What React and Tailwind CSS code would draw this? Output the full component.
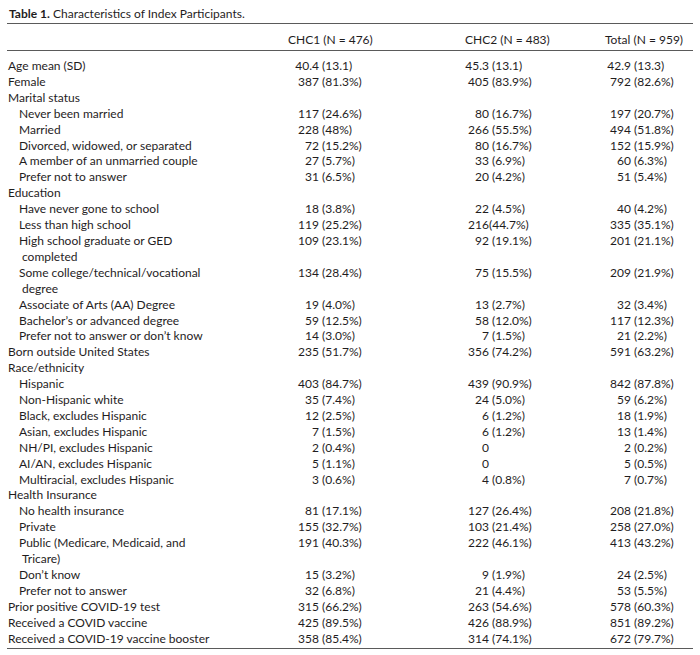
const rows = [
  { label: 'Age mean (SD)', values: [['40.4', ' (13.1)'], ['45.3', ' (13.1)'], ['42.9', ' (13.3)']] },
  { label: 'Female', values: [['387', ' (81.3%)'], ['405', ' (83.9%)'], ['792', ' (82.6%)']] },
  { label: 'Marital status' },
  { label: 'Never been married', sub: true, values: [['117', ' (24.6%)'], ['80', ' (16.7%)'], ['197', ' (20.7%)']] },
  { label: 'Married', sub: true, values: [['228', ' (48%)'], ['266', ' (55.5%)'], ['494', ' (51.8%)']] },
  { label: 'Divorced, widowed, or separated', sub: true, values: [['72', ' (15.2%)'], ['80', ' (16.7%)'], ['152', ' (15.9%)']] },
  { label: 'A member of an unmarried couple', sub: true, values: [['27', ' (5.7%)'], ['33', ' (6.9%)'], ['60', ' (6.3%)']] },
  { label: 'Prefer not to answer', sub: true, values: [['31', ' (6.5%)'], ['20', ' (4.2%)'], ['51', ' (5.4%)']] },
  { label: 'Education' },
  { label: 'Have never gone to school', sub: true, values: [['18', ' (3.8%)'], ['22', ' (4.5%)'], ['40', ' (4.2%)']] },
  { label: 'Less than high school', sub: true, values: [['119', ' (25.2%)'], ['216', '(44.7%)'], ['335', ' (35.1%)']] },
  { label: 'High school graduate or GED', more: 'completed', sub: true, values: [['109', ' (23.1%)'], ['92', ' (19.1%)'], ['201', ' (21.1%)']] },
  { label: 'Some college/technical/vocational', more: 'degree', sub: true, values: [['134', ' (28.4%)'], ['75', ' (15.5%)'], ['209', ' (21.9%)']] },
  { label: 'Associate of Arts (AA) Degree', sub: true, values: [['19', ' (4.0%)'], ['13', ' (2.7%)'], ['32', ' (3.4%)']] },
  { label: 'Bachelor’s or advanced degree', sub: true, values: [['59', ' (12.5%)'], ['58', ' (12.0%)'], ['117', ' (12.3%)']] },
  { label: 'Prefer not to answer or don’t know', sub: true, values: [['14', ' (3.0%)'], ['7', ' (1.5%)'], ['21', ' (2.2%)']] },
  { label: 'Born outside United States', values: [['235', ' (51.7%)'], ['356', ' (74.2%)'], ['591', ' (63.2%)']] },
  { label: 'Race/ethnicity' },
  { label: 'Hispanic', sub: true, values: [['403', ' (84.7%)'], ['439', ' (90.9%)'], ['842', ' (87.8%)']] },
  { label: 'Non-Hispanic white', sub: true, values: [['35', ' (7.4%)'], ['24', ' (5.0%)'], ['59', ' (6.2%)']] },
  { label: 'Black, excludes Hispanic', sub: true, values: [['12', ' (2.5%)'], ['6', ' (1.2%)'], ['18', ' (1.9%)']] },
  { label: 'Asian, excludes Hispanic', sub: true, values: [['7', ' (1.5%)'], ['6', ' (1.2%)'], ['13', ' (1.4%)']] },
  { label: 'NH/PI, excludes Hispanic', sub: true, values: [['2', ' (0.4%)'], ['0', ''], ['2', ' (0.2%)']] },
  { label: 'AI/AN, excludes Hispanic', sub: true, values: [['5', ' (1.1%)'], ['0', ''], ['5', ' (0.5%)']] },
  { label: 'Multiracial, excludes Hispanic', sub: true, values: [['3', ' (0.6%)'], ['4', ' (0.8%)'], ['7', ' (0.7%)']] },
  { label: 'Health Insurance' },
  { label: 'No health insurance', sub: true, values: [['81', ' (17.1%)'], ['127', ' (26.4%)'], ['208', ' (21.8%)']] },
  { label: 'Private', sub: true, values: [['155', ' (32.7%)'], ['103', ' (21.4%)'], ['258', ' (27.0%)']] },
  { label: 'Public (Medicare, Medicaid, and', more: 'Tricare)', sub: true, values: [['191', ' (40.3%)'], ['222', ' (46.1%)'], ['413', ' (43.2%)']] },
  { label: 'Don’t know', sub: true, values: [['15', ' (3.2%)'], ['9', ' (1.9%)'], ['24', ' (2.5%)']] },
  { label: 'Prefer not to answer', sub: true, values: [['32', ' (6.8%)'], ['21', ' (4.4%)'], ['53', ' (5.5%)']] },
  { label: 'Prior positive COVID-19 test', values: [['315', ' (66.2%)'], ['263', ' (54.6%)'], ['578', ' (60.3%)']] },
  { label: 'Received a COVID vaccine', values: [['425', ' (89.5%)'], ['426', ' (88.9%)'], ['851', ' (89.2%)']] },
  { label: 'Received a COVID-19 vaccine booster', values: [['358', ' (85.4%)'], ['314', ' (74.1%)'], ['672', ' (79.7%)']] },
];

// number boxes end at the same x in every row, so the "(" lines up
const colWidths = ['w-[170px]', 'w-[142px]', 'flex-1'];

function Value({ value, width }) {
  if (!value) return <div className={width} />;
  const [num, rest] = value;
  return (
    <div className={`${width} whitespace-pre`}>
      <span className="inline-block w-[30px] text-right">{num}</span>
      <span>{rest}</span>
    </div>
  );
}

function Row({ row }) {
  return (
    <>
      <div className="flex">
        <div className={`w-[282px] shrink-0 ${row.sub ? 'pl-[12px]' : 'pl-[1px]'}`}>{row.label}</div>
        {colWidths.map((w, i) => (
          <Value key={i} width={w} value={row.values?.[i]} />
        ))}
      </div>
      {row.more ? <div className="pl-[15px]">{row.more}</div> : null}
    </>
  );
}

export default function App() {
  return (
    <div className="w-[700px] h-[655px] bg-white text-[#1f1d1e] px-[7px] pt-[6px] font-['Lato',sans-serif] text-[12px] leading-[15.9px]">
      <p className="pl-[2px] leading-[16px]">
        <span className="font-bold">Table 1.</span>
        <span>{'  '}Characteristics of Index Participants.</span>
      </p>
      <div className="mt-[1px] h-px bg-[#5a5a5a]" />
      <div className="flex pt-[8px] pb-[2px] leading-[16px]">
        <div className="w-[281px] shrink-0" />
        <div className="w-[177px]">CHC1 (N = 476)</div>
        <div className="w-[140px]">CHC2 (N = 483)</div>
        <div className="flex-1">Total (N = 959)</div>
      </div>
      <div className="h-px bg-[#5a5a5a]" />
      <div className="pt-[7px] pb-[1px]">
        {rows.map((row, i) => (
          <Row key={i} row={row} />
        ))}
      </div>
      <div className="h-px bg-[#5a5a5a]" />
    </div>
  );
}
